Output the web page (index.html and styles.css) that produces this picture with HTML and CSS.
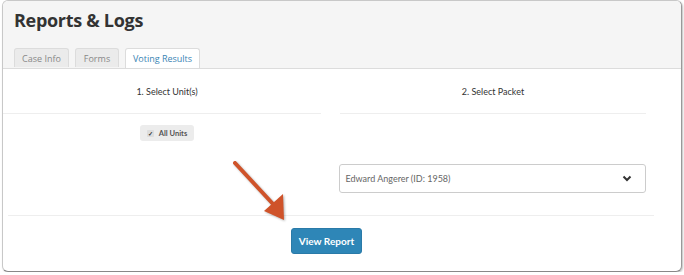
FILE: index.html
```html
<!DOCTYPE html>
<html lang="en">
<head>
    <meta charset="UTF-8">
    <title>Reports &amp; Logs</title>
    <link rel="stylesheet" href="styles.css">
</head>
<body>
    <div class="window">
        <header class="page-head">
            <h1>Reports &amp; Logs</h1>
            <nav class="tabs">
                <div class="tab tab-case">Case Info</div>
                <div class="tab tab-forms">Forms</div>
                <div class="tab tab-voting active">Voting Results</div>
            </nav>
        </header>

        <main class="panel">
            <div class="cols">
                <section class="col col-units">
                    <div class="col-title">1. Select Unit(s)</div>
                    <div class="col-body">
                        <label class="chip">
                            <span class="check">&#10003;</span>
                            All Units
                        </label>
                    </div>
                </section>
                <section class="col">
                    <div class="col-title">2. Select Packet</div>
                    <div class="col-body">
                        <div class="select">
                            <span>Edward Angerer (ID: 1958)</span>
                            <svg width="10" height="7" viewBox="0 0 10 7">
                                <path d="M1.5 1.5 L5 5 L8.5 1.5" fill="none" stroke="#333" stroke-width="2"/>
                            </svg>
                        </div>
                    </div>
                </section>
            </div>

            <div class="actions">
                <button class="btn">View Report</button>
            </div>
        </main>

        <!-- annotation arrow -->
        <svg class="arrow" width="70" height="70" viewBox="0 0 70 70">
            <line x1="4" y1="4" x2="42" y2="45" stroke="#cf532a" stroke-width="4" stroke-linecap="round"/>
            <polygon points="33,52 52,35 53,61" fill="#cf532a"/>
        </svg>
    </div>
</body>
</html>
```

FILE: styles.css
```css
body {
    margin: 0;
    padding: 0;
    background-color: #fff;
    font-family: 'Lato', sans-serif;
    color: #333;
}

.window {
    position: relative;
    box-sizing: border-box;
    width: 680px;
    height: 272px;
    margin-left: 2px;
    background-color: #fff;
    border: 1px solid #c8c8c8;
    border-right-color: #999;
    border-bottom-color: #888;
    border-radius: 6px;
    box-shadow: 1px 1px 2px rgba(0, 0, 0, 0.25);
    overflow: hidden;
}

.page-head {
    background-color: #f5f5f5;
    border-bottom: 1px solid #dcdcdc;
    padding: 8px 0 0 11px;
    height: 59px;
}

.page-head h1 {
    margin: 0;
    font-family: 'Open Sans', sans-serif;
    font-weight: 700;
    font-size: 18px;
    letter-spacing: -0.3px;
    color: #333;
    line-height: 22px;
}

.tabs {
    display: flex;
    gap: 6px;
    margin-top: 17px;
}

.tab {
    height: 19px;
    line-height: 19px;
    text-align: center;
    font-family: 'Open Sans', sans-serif;
    font-size: 9px;
    color: #888;
    background-color: #ebebeb;
    border: 1px solid #dcdcdc;
    border-bottom: none;
    border-radius: 3px 3px 0 0;
    box-sizing: border-box;
}

.tab-case { width: 55px; }
.tab-forms { width: 44px; }
.tab-voting { width: 75px; }

.tab.active {
    background-color: #fff;
    color: #3a84b4;
    height: 20px;
    margin-bottom: -1px;
}

.cols {
    display: grid;
    grid-template-columns: 318px 306px;
    column-gap: 19px;
}

.col-title {
    height: 44px;
    line-height: 46px;
    text-align: center;
    font-size: 9px;
    color: #333;
    border-bottom: 1px solid #eee;
}

.col-units .col-title,
.col-units .col-body {
    padding-left: 10px;
}

.col-body {
    display: flex;
    flex-direction: column;
    align-items: center;
    height: 101px;
}

.chip {
    margin-top: 11px;
    display: flex;
    align-items: center;
    gap: 5px;
    height: 16px;
    padding: 0 7px;
    background-color: #ececec;
    border-radius: 3px;
    font-size: 7.5px;
    font-weight: 700;
    color: #555;
}

.check {
    display: inline-block;
    width: 7px;
    height: 7px;
    line-height: 7px;
    font-size: 6px;
    text-align: center;
    background-color: #ddd;
    border-radius: 1px;
    color: #333;
}

.select {
    box-sizing: border-box;
    margin-top: 50px;
    margin-left: -2px;
    width: 307px;
    height: 29px;
    display: flex;
    align-items: center;
    justify-content: space-between;
    padding: 0 13px 0 6px;
    border: 1px solid #ccc;
    border-radius: 3px;
    font-size: 9px;
    color: #666;
}

.actions {
    margin: 0 27px 0 5px;
    border-top: 1px solid #eee;
    display: flex;
    justify-content: center;
    padding-top: 12px;
}

.btn {
    width: 71px;
    height: 26px;
    margin-left: -9px;
    background-color: #2e86b7;
    border: 1px solid #2a7aa8;
    border-radius: 3px;
    color: #fff;
    font-family: 'Lato', sans-serif;
    font-weight: 700;
    font-size: 10px;
    padding: 0;
}

.arrow {
    position: absolute;
    left: 228px;
    top: 158px;
    filter: drop-shadow(1px 1px 1px rgba(0, 0, 0, 0.3));
}
```
